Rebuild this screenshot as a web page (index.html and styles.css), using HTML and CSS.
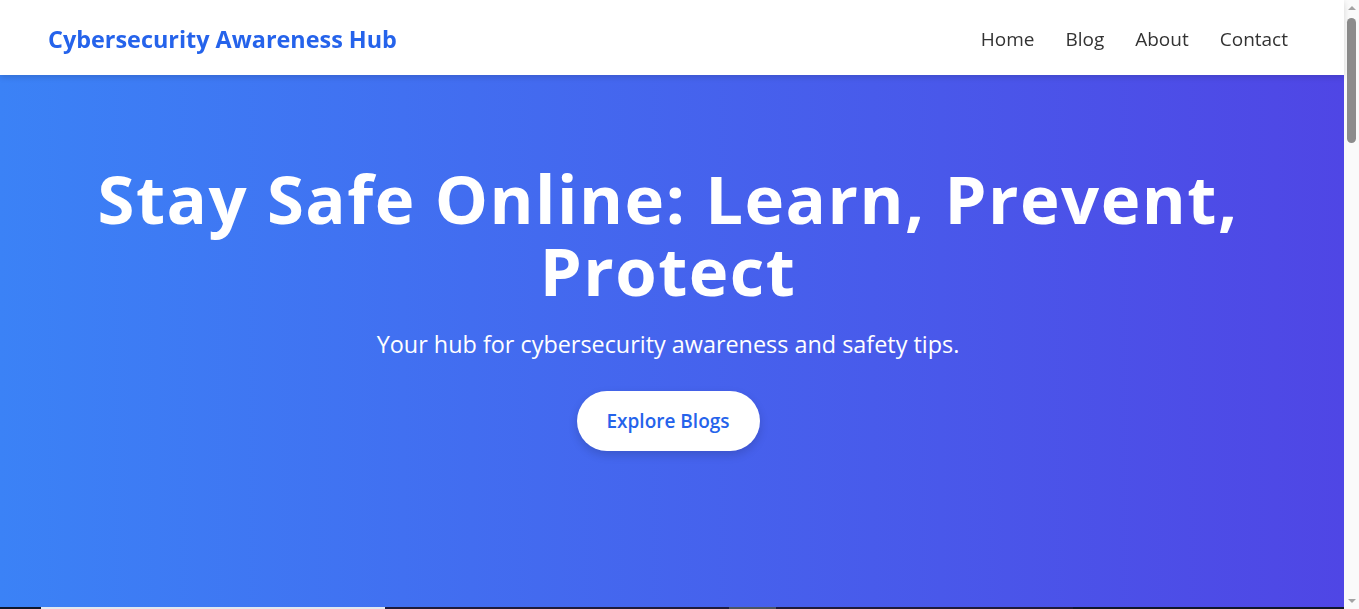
FILE: index.html
```html
<!DOCTYPE html>
<html lang="en">
<head>
<meta charset="utf-8">
<title>Cybersecurity Awareness Hub</title>
<link rel="stylesheet" href="styles.css">
</head>
<body>
<div class="page">
  <header class="site-header">
    <div class="brand">Cybersecurity Awareness Hub</div>
    <nav class="nav">
      <a href="#" class="nav-link">Home</a>
      <a href="#" class="nav-link">Blog</a>
      <a href="#" class="nav-link">About</a>
      <a href="#" class="nav-link">Contact</a>
    </nav>
  </header>
  <section class="hero">
    <h1 class="hero-title">Stay Safe Online: Learn, Prevent, Protect</h1>
    <p class="hero-sub">Your hub for cybersecurity awareness and safety tips.</p>
    <a href="#" class="hero-btn">Explore Blogs</a>
  </section>
  <section class="posts">
    <div class="card"></div>
    <div class="card dark"></div>
    <div class="card dark">
      <div class="card-chip"></div>
    </div>
  </section>
</div>
<div class="scrollbar" aria-hidden="true">
  <span class="sb-arrow up"></span>
  <span class="sb-thumb"></span>
  <span class="sb-arrow down"></span>
</div>
</body>
</html>
```
FILE: styles.css
```css
* { box-sizing: border-box; }
html, body { margin: 0; padding: 0; }
body {
  font-family: "Open Sans", "Noto Sans", sans-serif;
  background: #0f172a;
  overflow: hidden;
  height: 609px;
}
.page {
  width: 1344px;
}
.site-header {
  height: 75px;
  background: #fff;
  display: flex;
  align-items: center;
  justify-content: space-between;
  padding: 3px 56px 0 48px;
  box-shadow: 0 2px 6px rgba(0,0,0,0.15);
  position: relative;
  z-index: 2;
}
.brand {
  color: #2563eb;
  font-weight: 700;
  font-size: 23.4px;
}
.nav { display: flex; gap: 31px; }
.nav-link {
  color: #333;
  text-decoration: none;
  font-size: 19px;
}
.hero {
  height: 532px;
  background: linear-gradient(90deg, #3b82f6, #4f46e5);
  color: #fff;
  display: flex;
  flex-direction: column;
  align-items: center;
  padding: 87px 48px 0 40px;
  text-align: center;
}
.hero-title {
  margin: 0;
  font-size: 67px;
  letter-spacing: 1.5px;
  line-height: 72px;
  font-weight: 700;
}
.hero-sub {
  margin: 22px 0 0;
  font-size: 23.4px;
  line-height: 32px;
}
.hero-btn {
  margin-top: 31px;
  background: #fff;
  color: #2563eb;
  text-decoration: none;
  font-weight: 600;
  font-size: 19px;
  height: 60px;
  width: 183px;
  border-radius: 30px;
  display: flex;
  align-items: center;
  justify-content: center;
  box-shadow: 0 4px 10px rgba(0,0,0,0.15);
}
.posts {
  display: grid;
  grid-template-columns: 344px 344px 344px;
  padding: 0 41px;
  height: 600px;
}
.card { background: #e2e8f0; height: 400px; }
.card.dark { background: #1e1b3a; }
.card-chip {
  width: 47px;
  height: 20px;
  background: #4b5563;
}
.scrollbar {
  position: fixed;
  top: 0;
  right: 0;
  width: 15px;
  height: 609px;
  background: #fafafa;
  display: flex;
  flex-direction: column;
  align-items: center;
}
.sb-arrow {
  width: 0;
  height: 0;
  border-left: 4px solid transparent;
  border-right: 4px solid transparent;
}
.sb-arrow.up {
  margin-top: 6px;
  border-bottom: 4px solid #a3a3a3;
}
.sb-thumb {
  margin-top: 8px;
  width: 9px;
  height: 125px;
  border-radius: 5px;
  background: #8c8c8c;
}
.sb-arrow.down {
  margin-top: auto;
  margin-bottom: 6px;
  border-top: 4px solid #a3a3a3;
}
```
